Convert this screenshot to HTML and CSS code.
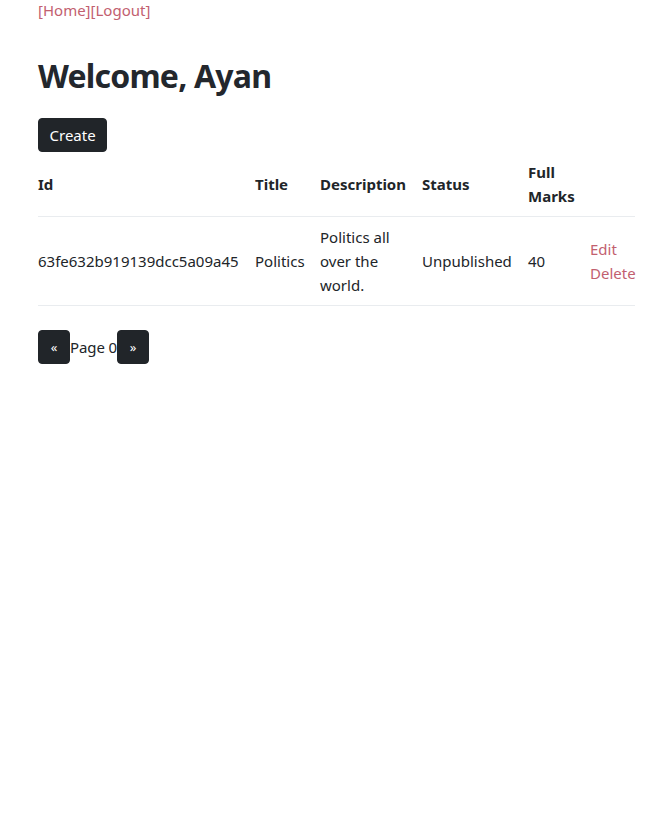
FILE: index.html
```html
<!DOCTYPE html>
<html>
<head>
<meta charset="utf-8">
<link rel="stylesheet" href="styles.css">
</head>
<body>
<div class="page">
  <nav class="topnav"><a href="#">[Home]</a><a href="#">[Logout]</a></nav>
  <h1 class="title">Welcome, Ayan</h1>
  <button class="btn">Create</button>
  <table class="table">
    <colgroup>
      <col class="c-id"><col class="c-title"><col class="c-desc"><col class="c-status"><col class="c-marks"><col class="c-actions">
    </colgroup>
    <thead>
      <tr><th>Id</th><th>Title</th><th>Description</th><th>Status</th><th>Full Marks</th><th></th></tr>
    </thead>
    <tbody>
      <tr>
        <td>63fe632b919139dcc5a09a45</td>
        <td>Politics</td>
        <td>Politics all over the world.</td>
        <td>Unpublished</td>
        <td>40</td>
        <td><a href="#">Edit</a><br><a href="#">Delete</a></td>
      </tr>
    </tbody>
  </table>
  <div class="pager"><button class="btn btn-sq">&laquo;</button><span class="page-label">Page 0</span><button class="btn btn-sq">&raquo;</button></div>
</div>
</body>
</html>
```
FILE: styles.css
```css
html, body { margin: 0; padding: 0; background: #fff; }
body {
  font-family: "Noto Sans", "Open Sans", sans-serif;
  font-size: 15px;
  line-height: 24px;
  color: #212529;
}
.page { width: 597px; padding-left: 38px; }
a { color: #c2606f; text-decoration: none; }
.topnav { height: 20px; line-height: 20px; }
.title {
  font-size: 32px;
  font-weight: 700;
  letter-spacing: -0.8px;
  line-height: 38px;
  margin: 37px 0 23px;
  color: #23272d;
}
.btn {
  font-family: inherit;
  font-size: 15px;
  line-height: 24px;
  color: #fff;
  background: #212529;
  border: 1px solid #212529;
  border-radius: 4px;
  padding: 4px 10.5px;
  cursor: pointer;
  display: inline-block;
  vertical-align: top;
}
.table { width: 100%; border-collapse: collapse; table-layout: fixed; margin: 0; }
.c-id { width: 209px; }
.c-title { width: 65px; }
.c-desc { width: 102px; }
.c-status { width: 106px; }
.c-marks { width: 62px; }
.c-actions { width: 53px; }
.table th, .table td {
  padding: 8px;
  vertical-align: middle;
  text-align: left;
  border-bottom: 1px solid #e9ecef;
}
.table th:first-child, .table td:first-child { padding-left: 0; }
.table th:last-child, .table td:last-child { padding-right: 0; }
.table th { font-weight: 700; }
.pager { display: flex; align-items: center; margin-top: 24px; }
.page-label { letter-spacing: -0.1px; }
.btn-sq { width: 32px; height: 34px; padding: 0; font-size: 13px; }
```
